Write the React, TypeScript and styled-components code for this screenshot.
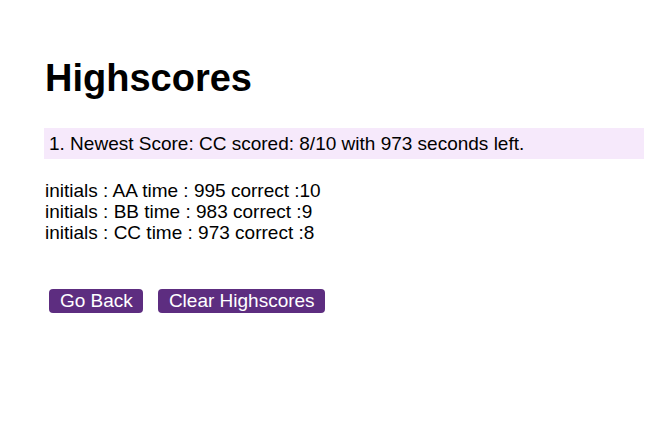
import React from 'react';
import styled, { createGlobalStyle } from 'styled-components';

const scores = [
	{ initials: 'AA', time: 995, correct: 10 },
	{ initials: 'BB', time: 983, correct: 9 },
	{ initials: 'CC', time: 973, correct: 8 },
];

const GlobalStyle = createGlobalStyle`
	html, body {
		margin: 0;
		padding: 0;
		background: #ffffff;
	}
	body {
		font-family: 'Liberation Sans', Arial, Helvetica, sans-serif;
		color: #000000;
	}
`;

const Page = styled.main`
	width: 600px;
	padding: 56px 0 0 44px;
`;

const Title = styled.h1`
	margin: 0 0 0 1px;
	font-size: 38px;
	line-height: 44px;
	font-weight: 700;
`;

const Newest = styled.div`
	margin-top: 28px;
	height: 31px;
	padding-left: 5px;
	display: flex;
	align-items: center;
	background: #f6e9fb;
	font-size: 19px;
`;

const List = styled.ul`
	list-style: none;
	margin: 21px 0 0 1px;
	padding: 0;
`;

const Row = styled.li`
	font-size: 19px;
	line-height: 21px;
`;

const Actions = styled.div`
	display: flex;
	gap: 15px;
	margin: 46px 0 0 5px;
`;

const Button = styled.button`
	height: 24px;
	padding: 0 10px 0 11px;
	border: none;
	border-radius: 4px;
	background: #5d2d80;
	color: #ffffff;
	font-family: 'Liberation Sans', Arial, sans-serif;
	font-size: 19px;
	line-height: 24px;
	cursor: pointer;
`;

export default function App() {
	const last = scores[scores.length - 1];
	return (
		<>
			<GlobalStyle />
			<Page>
				<Title>Highscores</Title>
				<Newest>
					1. Newest Score: {last.initials} scored: {last.correct}/10 with {last.time} seconds left.
				</Newest>
				<List>
					{scores.map((s) => (
						<Row key={s.initials}>
							initials : {s.initials} time : {s.time} correct :{s.correct}
						</Row>
					))}
				</List>
				<Actions>
					<Button>Go Back</Button>
					<Button>Clear Highscores</Button>
				</Actions>
			</Page>
		</>
	);
}
